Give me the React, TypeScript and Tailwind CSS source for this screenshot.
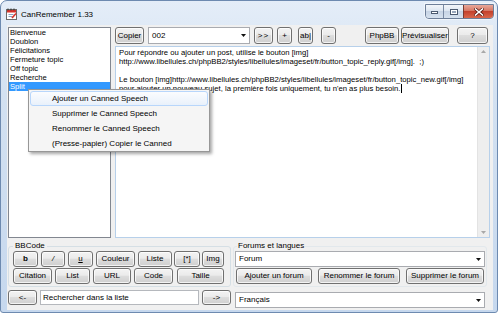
import React from "react";

const BTN =
  "flex items-center justify-center h-full rounded-[3px] border border-[#707070] bg-[linear-gradient(#f3f3f3,#ebebeb_45%,#dddddd_50%,#cfcfcf)] text-[8px] leading-none text-black shadow-[inset_0_0_0_1px_rgba(255,255,255,0.75)] shrink-0";

function Btn({ className = "", children }: { className?: string; children: React.ReactNode }) {
  return <div className={`${BTN} ${className}`}>{children}</div>;
}

function Arrow() {
  return (
    <svg width="5" height="3" viewBox="0 0 5 3">
      <path d="M0 0H5L2.5 3Z" fill="#111" />
    </svg>
  );
}

function Combo({ className = "", text }: { className?: string; text: string }) {
  return (
    <div className={`flex items-center h-full border border-[#a9abb0] bg-white shrink-0 ${className}`}>
      <span className="flex-1 pl-[3px] text-[8px] leading-none text-black">{text}</span>
      <div className="w-[12px] h-full flex items-center justify-center">
        <Arrow />
      </div>
    </div>
  );
}

const listItems = ["Bienvenue", "Doublon", "Félicitations", "Fermeture topic", "Off topic", "Recherche"];

export default function App() {
  return (
    <div className="relative w-[500px] h-[318px] bg-white overflow-hidden [font-family:'Liberation_Sans',Arial,sans-serif] text-black">
      {/* window */}
      <div className="w-[498px] h-[313px] rounded-t-[7px] rounded-b-[3px] border border-[#6d8ab0] bg-[linear-gradient(#e4edf8,#d3e1f1_30%,#c6d8ee)] flex flex-col">
        {/* title bar */}
        <div className="h-[24px] flex items-start shrink-0">
          <div className="mt-[7px] ml-[5px] w-[11px] h-[12px]">
            <svg width="11" height="12" viewBox="0 0 11 12">
              <rect x="0.5" y="1.5" width="10" height="10" fill="#fff" stroke="#6b6b6b" />
              <rect x="1" y="2" width="9" height="2.5" fill="#d8322a" />
              <path d="M2.5 6.5h5M2.5 8.5h4" stroke="#8aa0c0" strokeWidth="1" />
              <path d="M6 10L10 5.5" stroke="#d8322a" strokeWidth="1.6" />
              <circle cx="2" cy="1.5" r="0.9" fill="#444" />
              <circle cx="5" cy="1.5" r="0.9" fill="#444" />
              <circle cx="8" cy="1.5" r="0.9" fill="#444" />
            </svg>
          </div>
          <div className="ml-[4px] mt-[9px] text-[8px] leading-[10px] text-black">CanRemember 1.33</div>
          <div className="flex-1" />
          <div className="mt-[3px] mr-[3px] flex h-[15px] rounded-b-[4px] border border-[#6e7f99] overflow-hidden shadow-[0_0_0_1px_rgba(255,255,255,0.5)]">
            <div className="w-[18px] h-full flex items-end justify-center pb-[4px] bg-[linear-gradient(#f3f6fa,#dde6f1_45%,#c7d4e5_50%,#d6e1ee)] border-r border-[#7a8aa3]">
              <div className="w-[7px] h-[3px] bg-white border border-[#4c5a70]" />
            </div>
            <div className="w-[20px] h-full flex items-center justify-center bg-[linear-gradient(#f3f6fa,#dde6f1_45%,#c7d4e5_50%,#d6e1ee)] border-r border-[#7a3a30]">
              <div className="w-[8px] h-[6px] border border-[#4c5a70] bg-white p-[1px]">
                <div className="w-full h-full border border-[#9aa8bc]" />
              </div>
            </div>
            <div className="w-[29px] h-full flex items-center justify-center bg-[linear-gradient(#e8a89b,#d77763_45%,#c4422d_50%,#d9674b)]">
              <svg width="10" height="8" viewBox="0 0 10 8">
                <path d="M1.5 1L8.5 7M8.5 1L1.5 7" stroke="#5a1a12" strokeWidth="3" strokeLinecap="square" />
                <path d="M1.5 1L8.5 7M8.5 1L1.5 7" stroke="#fff" strokeWidth="1.6" strokeLinecap="square" />
              </svg>
            </div>
          </div>
        </div>

        {/* client area */}
        <div className="ml-[6px] mr-[4px] mb-[2px] h-[285px] bg-[#f0f0f0] pl-[1px] pt-[2px] flex flex-col">
          {/* top section */}
          <div className="h-[211px] flex shrink-0">
            {/* list */}
            <div className="w-[103px] h-full border border-[#828790] bg-white pt-0 flex flex-col">
              {listItems.map((t) => (
                <div key={t} className="h-[9px] pl-[1px] text-[7.6px] leading-[9px] whitespace-nowrap">
                  {t}
                </div>
              ))}
              <div className="h-[9px] pl-[1px] text-[7.6px] leading-[9px] bg-[#3399ff] text-white">Split</div>
            </div>

            {/* right panel */}
            <div className="ml-[4px] w-[375px] h-full flex flex-col">
              <div className="h-[17px] flex shrink-0">
                <Btn className="w-[29px]">Copier</Btn>
                <Combo className="ml-[4px] w-[102px]" text="002" />
                <Btn className="ml-[4px] w-[19px] tracking-[1px] text-[6px]">&gt;&gt;</Btn>
                <Btn className="ml-[4px] w-[15px]">+</Btn>
                <Btn className="ml-[6px] w-[15px]">ab|</Btn>
                <Btn className="ml-[8px] w-[15px]">-</Btn>
                <Btn className="ml-[29px] w-[34px]">PhpBB</Btn>
                <Btn className="ml-[2px] w-[48px]">Prévisualiser</Btn>
                <Btn className="ml-[8px] w-[31px]">?</Btn>
              </div>
              <div className="mt-[2px] flex-1 border border-[#b7d0ea] bg-white flex">
                <div className="flex-1 pl-[3px] pt-[1px] text-[7.7px] leading-[9px] whitespace-pre">
                  <div>Pour répondre ou ajouter un post, utilise le bouton [img]</div>
                  <div>http://www.libellules.ch/phpBB2/styles/libellules/imageset/fr/button_topic_reply.gif[/img].  ;)</div>
                  <div>&nbsp;</div>
                  <div>Le bouton [img]http://www.libellules.ch/phpBB2/styles/libellules/imageset/fr/button_topic_new.gif[/img]</div>
                  <div className="flex items-center">
                    <span>pour ajouter un nouveau sujet, la première fois uniquement, tu n'en as plus besoin.</span>
                    <span className="ml-[1px] w-[1px] h-[9px] bg-black" />
                  </div>
                </div>
                <div className="w-[12px] h-full bg-[#eeeeee] border-l border-[#e3e3e3] flex flex-col items-center justify-between py-[3px]">
                  <svg width="5" height="3" viewBox="0 0 5 3">
                    <path d="M0 3H5L2.5 0Z" fill="#a8a8a8" />
                  </svg>
                  <svg width="5" height="3" viewBox="0 0 5 3">
                    <path d="M0 0H5L2.5 3Z" fill="#a8a8a8" />
                  </svg>
                </div>
              </div>
            </div>
          </div>

          {/* bottom section */}
          <div className="mt-[3px] flex">
            {/* left column */}
            <div className="w-[223px] flex flex-col">
              <fieldset className="border border-[#d5dfe5] rounded-[3px] pl-[4px] pb-[2px]">
                <legend className="px-[2px] text-[8px] leading-[10px]">BBCode</legend>
                <div className="h-[16px] flex">
                  <Btn className="w-[25px] font-bold">b</Btn>
                  <Btn className="ml-[3px] w-[24px] italic">/</Btn>
                  <Btn className="ml-[3px] w-[25px] underline">u</Btn>
                  <Btn className="ml-[3px] w-[39px]">Couleur</Btn>
                  <Btn className="ml-[3px] w-[34px]">Liste</Btn>
                  <Btn className="ml-[2px] w-[26px]">[*]</Btn>
                  <Btn className="ml-[2px] w-[22px]">Img</Btn>
                </div>
                <div className="mt-[1px] h-[16px] flex">
                  <Btn className="w-[39px]">Citation</Btn>
                  <Btn className="ml-[3px] w-[35px]">List</Btn>
                  <Btn className="ml-[3px] w-[38px]">URL</Btn>
                  <Btn className="ml-[3px] w-[39px]">Code</Btn>
                  <Btn className="ml-[4px] w-[47px]">Taille</Btn>
                </div>
              </fieldset>
              <div className="mt-[3px] h-[15px] flex">
                <Btn className="w-[29px] text-[6px]">&lt;-</Btn>
                <div className="ml-[3px] w-[159px] h-full border border-[#b5b8bd] bg-white flex items-center pl-[2px] text-[8px] leading-none">
                  Rechercher dans la liste
                </div>
                <Btn className="ml-[3px] w-[29px] text-[6px]">-&gt;</Btn>
              </div>
            </div>

            {/* right column */}
            <div className="ml-[2px] w-[254px] flex flex-col">
              <fieldset className="border border-[#e2e8ec] rounded-[3px] pl-[1px] pb-[2px]">
                <legend className="ml-[2px] px-[1px] text-[8px] leading-[10px]">Forums et langues</legend>
                <Combo className="w-[250px] !h-[16px]" text="Forum" />
                <div className="mt-[1px] h-[16px] flex">
                  <Btn className="ml-[1px] w-[76px]">Ajouter un forum</Btn>
                  <Btn className="ml-[6px] w-[82px]">Renommer le forum</Btn>
                  <Btn className="ml-[6px] w-[78px]">Supprimer le forum</Btn>
                </div>
              </fieldset>
              <div className="mt-[5px] h-[16px] pl-[2px] flex">
                <Combo className="w-[250px]" text="Français" />
              </div>
            </div>
          </div>
        </div>
      </div>

      {/* context menu */}
      <div className="absolute left-[28px] top-[89px] w-[182px] h-[63px] border border-[#979797] bg-[#f5f5f5] shadow-[2px_2px_3px_rgba(0,0,0,0.35)] pt-[1px] px-[1px] flex flex-col">
        <div className="h-[15px] flex items-center pl-[21px] rounded-[3px] border border-[#b8d6fb] bg-[linear-gradient(#fbfcfe,#e9f1fb)] text-[8px] leading-none">
          Ajouter un Canned Speech
        </div>
        <div className="h-[15px] flex items-center pl-[22px] text-[8px] leading-none">Supprimer le Canned Speech</div>
        <div className="h-[15px] flex items-center pl-[22px] text-[8px] leading-none">Renommer le Canned Speech</div>
        <div className="h-[15px] flex items-center pl-[22px] text-[8px] leading-none">(Presse-papier) Copier le Canned</div>
      </div>
    </div>
  );
}
